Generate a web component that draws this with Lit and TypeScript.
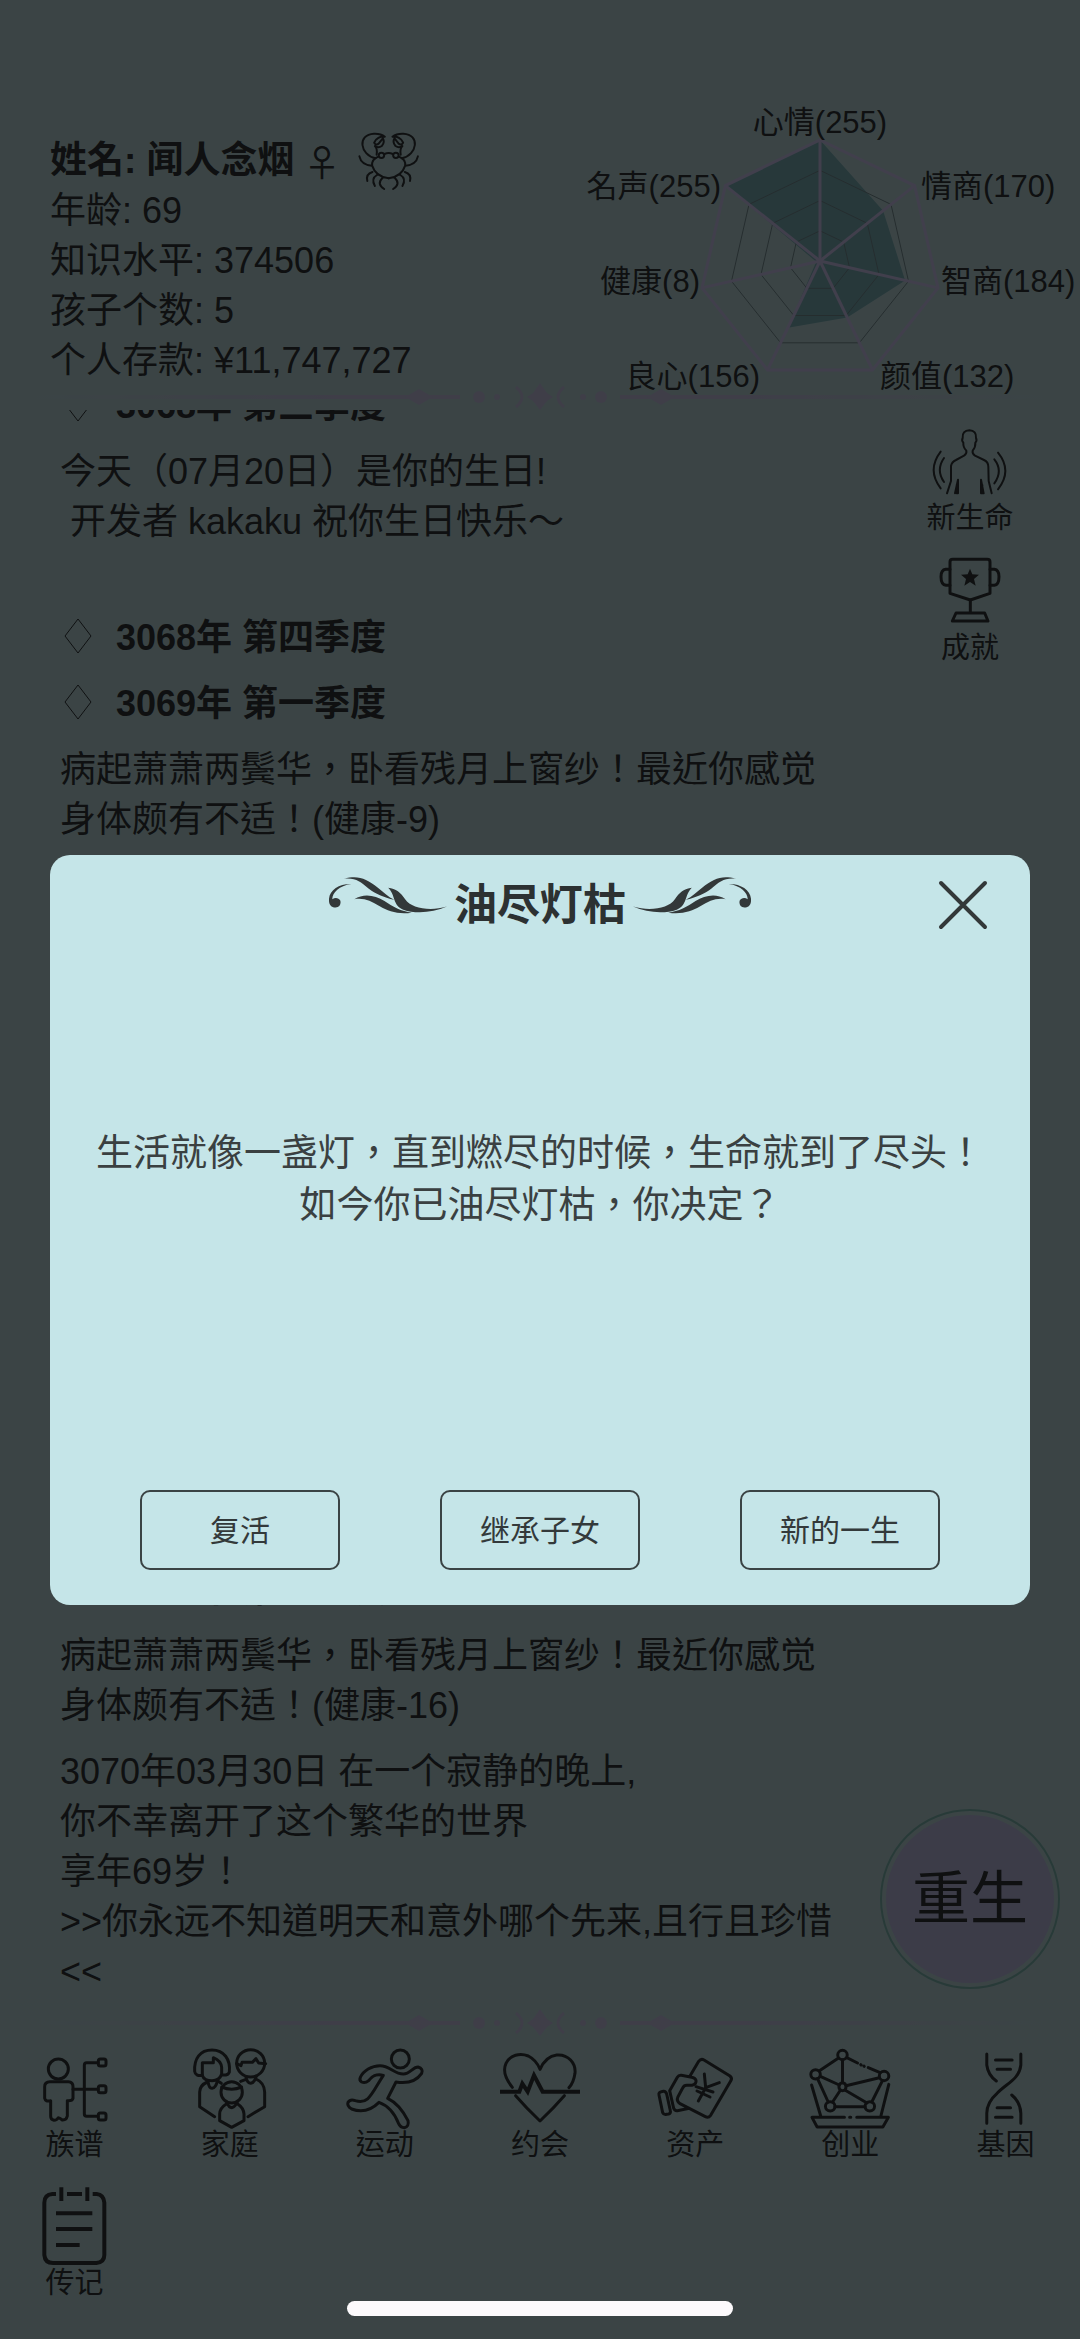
import { LitElement, html, svg, css } from "lit";
import { customElement, state } from "lit/decorators.js";

type Icon = { box: string; art: unknown; weight?: "thin" };

const icons: Record<string, Icon> = {
  crab: {
    box: "1036 121 186 183",
    weight: "thin",
    art: svg`
      <defs>
        <g id="crab-half">
          <path d="M1090 203C1044 192 1036 132 1085 129Q1105 128 1117 138C1104 136 1090 144 1086 156Q1091 165 1099 159L1111 143Q1118 155 1108 166Q1098 173 1088 166Q1096 174 1093 192"/>
          <circle cx="1107" cy="194" r="8"/>
          <path d="M1098 198Q1078 206 1080 225Q1090 258 1128 263M1043 197Q1048 222 1079 225M1081 244Q1061 250 1066 271M1094 253Q1076 264 1088 286M1110 262Q1092 280 1115 295"/>
        </g>
      </defs>
      <use href="#crab-half"/>
      <use href="#crab-half" transform="translate(2256 0) scale(-1 1)"/>
      <path d="M1116 190Q1128 184 1140 190"/>`,
  },
  life: {
    box: "150 36 240 240",
    weight: "thin",
    art: svg`
      <path d="M201 250L213 213V168Q215 156 228 150L252 137Q261 131 259 122Q249 112 250 98Q244 92 248 84Q246 62 268 61Q290 62 288 84Q292 92 286 98Q287 112 278 122Q276 131 285 137L312 150Q325 156 325 170L326 213L335 250"/>
      <path d="M225 250L234 209V250M311 250L303 209V250M230 225V250M307 225V250"/>
      <path d="M182 125Q140 180 182 235M192 144Q167 180 192 216M354 128Q398 182 354 238M343 148Q370 182 343 220"/>`,
  },
  trophy: {
    box: "150 426 240 240",
    art: svg`
      <path d="M218 448H322Q330 448 330 456V550L271 570L210 550V456Q210 448 218 448Z"/>
      <path d="M210 478H197Q183 480 183 500Q183 524 198 526H210M330 478H343Q357 480 357 500Q357 524 343 526H330M271 570V608M228 609H314L324 633H217Z"/>
      <path class="solid" d="M270 476L277 493L297 494L282 507L287 527L270 516L253 527L258 507L243 494L263 493Z"/>`,
  },
  tree: {
    box: "105 57 240 240",
    art: svg`
      <circle cx="175" cy="117" r="30"/>
      <path d="M150 155H205Q219 155 219 170V205Q217 213 202 212V258Q199 271 187 270Q179 263 175 263Q171 271 162 271Q152 269 152 259V212Q136 216 134 205V170Q134 155 150 155Z"/>
      <path d="M219 178H294M294 98H260Q253 98 253 105V252Q253 259 260 259H294"/>
      <rect x="295" y="87" width="23" height="21" rx="6"/>
      <rect x="295" y="167" width="23" height="21" rx="6"/>
      <rect x="295" y="249" width="23" height="21" rx="6"/>`,
  },
  family: {
    box: "570 57 240 240",
    art: svg`
      <path d="M607 136Q586 139 584 124C582 86 600 60 636 60C672 60 692 88 688 126Q685 137 665 135"/>
      <path d="M607 136V98H640V83Q663 92 665 112V132C660 148 646 152 636 152C620 152 610 146 607 136"/>
      <path d="M624 152Q626 175 636 175Q648 173 652 152M622 156Q599 166 599 186V230L644 260M652 152L664 160"/>
      <ellipse cx="752" cy="100" rx="42" ry="41"/>
      <path d="M710 101L723 107L726 97H757L768 86L776 99L797 101"/>
      <path d="M738 141Q742 160 752 160Q763 158 768 141M768 147Q793 158 794 186V230L744 260M738 148L722 154"/>
      <circle cx="695" cy="187" r="32"/>
      <path d="M665 171Q695 184 725 171M680 216Q686 233 696 233Q706 230 712 216M680 221Q659 234 659 252V272L695 292L732 272V252Q731 233 712 221"/>`,
  },
  run: {
    box: "1035 57 240 240",
    art: svg`
      <circle cx="1201" cy="87" r="27"/>
      <path d="M1081 142C1090 122 1115 107 1140 107C1170 107 1182 132 1210 132C1231 132 1238 111 1254 111Q1271 116 1265 130C1250 152 1225 162 1188 156L1163 205C1190 218 1208 240 1224 272Q1228 290 1213 293Q1201 293 1196 281C1184 250 1168 228 1137 217C1112 242 1085 248 1055 237Q1040 229 1044 217Q1051 206 1066 212C1106 226 1116 188 1150 136C1130 130 1114 140 1106 152Q1095 161 1085 156Q1077 151 1081 142Z"/>`,
  },
  heart: {
    box: "540 147 240 240",
    art: svg`
      <path d="M577 262C555 235 548 212 558 190C570 165 600 158 625 168C645 178 655 195 660 208C668 190 685 168 710 165C745 162 768 190 765 220C762 240 755 255 747 263M587 287Q620 325 660 363Q700 325 733 287"/>
      <path class="heavy" d="M540 275H598L607 251L623 275L642 226L668 275H780"/>`,
  },
  asset: {
    box: "1005 147 240 240",
    art: svg`
      <path d="M1110 228L1136 184Q1143 175 1152 180L1230 228Q1238 235 1232 243L1172 346Q1165 355 1156 350L1080 311Q1068 303 1074 290L1088 264Q1092 256 1100 256H1116Q1130 253 1128 241Q1125 233 1115 232L1084 226Q1076 225 1072 232L1049 272L1061 325Q1064 333 1072 332L1108 325"/>
      <path d="M1024 275Q1015 277 1017 285L1028 338Q1031 345 1040 343L1046 342Q1053 340 1051 332L1040 282Q1037 273 1030 274Z"/>
      <path d="M1153 222L1157 263L1198 248M1157 263L1135 303M1128 260L1179 276M1131 273L1170 291"/>`,
  },
  network: {
    box: "885 57 202 240",
    art: svg`
      <ellipse cx="967" cy="75" rx="12" ry="14"/><ellipse cx="899" cy="133" rx="12" ry="14"/>
      <ellipse cx="1072" cy="138" rx="12" ry="14"/><ellipse cx="967" cy="170" rx="9" ry="12"/>
      <ellipse cx="936" cy="229" rx="12" ry="14"/><ellipse cx="1036" cy="229" rx="12" ry="14"/>
      <path d="M967 89V158M957 84L908 123M911 139L959 165M976 167L1060 143M962 180L942 216M973 180L1029 219M948 230H1024M904 146L931 216M1068 152L1041 216M978 83L1005 99M1032 113L1062 128M1013 104L1014 105M1021 108L1022 109"/>
      <path d="M889 165L912 258M1084 163L1064 258M972 262H890L903 291H1069L1083 262H1003M985 262H988"/>`,
  },
  gene: {
    box: "1277 57 202 240",
    art: svg`
      <path d="M1332 72V105Q1335 135 1356 153M1418 72V105C1414 148 1382 160 1358 190Q1332 217 1332 250V280M1395 195Q1417 217 1418 250V280M1354 90H1396M1358 118H1392M1358 233H1392M1354 262H1396"/>`,
  },
  note: {
    box: "105 471 240 240",
    art: svg`
      <path class="heavy" d="M168 492H157Q133 494 133 518V675Q135 699 159 699H289Q313 697 313 675V518Q311 494 290 492H278M201 492H246M184 472V513M262 472V513M168 550H277M168 597H277M168 645H239"/>`,
  },
};

const drawIcon = (name: string) => html`<svg
  class="icon ${icons[name].weight ?? ""}"
  viewBox=${icons[name].box}
  preserveAspectRatio="none"
  aria-hidden="true"
>${icons[name].art}</svg>`;

const attributes = [
  { name: "心情", value: 255, x: 820, y: 133, anchor: "middle" },
  { name: "情商", value: 170, x: 921, y: 197, anchor: "start" },
  { name: "智商", value: 184, x: 941, y: 292, anchor: "start" },
  { name: "颜值", value: 132, x: 880, y: 387, anchor: "start" },
  { name: "良心", value: 156, x: 760, y: 387, anchor: "end" },
  { name: "健康", value: 8, x: 700, y: 292, anchor: "end" },
  { name: "名声", value: 255, x: 721, y: 197, anchor: "end" },
];
const MAX = 255;
const RADIUS = 121;
const CENTER = { x: 820, y: 261 };

const vertex = (i: number, r: number) => {
  const a = (i / attributes.length) * Math.PI * 2 - Math.PI / 2;
  return `${(CENTER.x + r * Math.cos(a)).toFixed(1)},${(CENTER.y + r * Math.sin(a)).toFixed(1)}`;
};
const ring = (r: number) => attributes.map((_, i) => vertex(i, r)).join(" ");

const divider = html`<svg class="divider" viewBox="0 0 1080 24" aria-hidden="true">
  <defs>
    <linearGradient id="fade" gradientUnits="userSpaceOnUse" x1="30" y1="0" x2="1050" y2="0">
      <stop offset="0" stop-color="#d2d0f2" stop-opacity="0"/>
      <stop offset="0.3" stop-color="#d2d0f2"/>
      <stop offset="0.7" stop-color="#d2d0f2"/>
      <stop offset="1" stop-color="#d2d0f2" stop-opacity="0"/>
    </linearGradient>
  </defs>
  <path d="M30 9H460V13H30ZM620 9H1050V13H620Z" fill="url(#fade)"/>
  <g fill="#d2d0f2">
    <path d="M405 11L419 3L433 11L419 19ZM647 11L661 3L675 11L661 19Z"/>
    <circle cx="479" cy="11" r="6"/><circle cx="601" cy="11" r="6"/>
    <circle cx="497" cy="11" r="3"/><circle cx="583" cy="11" r="3"/>
    <path d="M540 -3L547 7L553 11L547 15L540 24L533 15L527 11L533 7Z"/>
  </g>
  <path d="M516 1Q528 11 516 21M564 1Q552 11 564 21" fill="none" stroke="#d2d0f2" stroke-width="3"/>
</svg>`;

const flourish = (side: string) => html`<svg class="flourish ${side}" viewBox="64 108 251 110" preserveAspectRatio="none" aria-hidden="true">
  <path d="M111 129C84 128 62 150 64 180C65 194 71 199 78 199C87 198 90 188 88 178C85 170 77 168 71 174C71 155 86 134 111 129Z"/>
  <path d="M96 113C126 102 143 112 168 140C181 155 190 167 203 176C180 168 163 158 148 142C130 122 122 110 96 113Z"/>
  <path d="M118 174C138 155 162 162 182 179C199 195 218 210 240 214C212 220 190 210 172 195C153 179 138 169 118 174Z"/>
  <path d="M190 140C206 142 217 155 226 174C239 201 278 211 315 196C284 215 247 218 222 205C199 192 206 163 190 140Z"/>
</svg>`;

@customElement("app-root")
export class AppRoot extends LitElement {
  @state() private open = true;

  static styles = css`
    :host {
      display: block;
      position: relative;
      color: #33383a;
      font-family: "Liberation Sans", "Noto Sans CJK TC", "Noto Sans CJK SC", sans-serif;
    }
    button {
      margin: 0;
      padding: 0;
      border: 0;
      background: none;
      color: inherit;
      font: inherit;
      cursor: pointer;
    }
    p, h1, h2, dl, dd, dt { margin: 0; padding: 0; font-size: inherit; }
    svg { display: block; flex: none; }

    .page {
      display: flex;
      flex-direction: column;
      min-height: 100vh;
      background: #c5e5e8;
      font-size: 36px;
      line-height: 50px;
      overflow: hidden;
    }
    .top { display: flex; justify-content: space-between; }
    .stats { padding: 136px 0 0 50px; }
    .name { display: flex; align-items: center; height: 50px; font-size: 37px; white-space: pre; }
    .gender { padding-left: 9px; font-family: "Noto Sans CJK SC", sans-serif; font-weight: 400; }
    .name .icon { width: 64px; height: 61px; margin-left: 16px; }
    .stat { display: flex; }
    .stat dt { white-space: pre; }

    .radar { width: 520px; height: 295px; margin-top: 90px; overflow: visible; font-size: 31px; fill: currentColor; }
    .radar .area { fill: #82bcc4; }
    .radar .grid { fill: none; stroke: #7e969c; stroke-width: 1; }
    .radar .edge { fill: none; stroke: #dad2ff; stroke-width: 3; }

    .divider { width: 100%; height: 24px; overflow: visible; }

    .main { display: flex; flex: 1; padding-bottom: 15px; overflow: hidden; }
    .log { display: flex; flex: 1; flex-direction: column; justify-content: space-between; padding-left: 60px; }
    .entries { display: flex; flex-direction: column; gap: 16px; max-width: 780px; }
    .entries.earlier { margin-top: -29px; }
    .season { display: flex; align-items: center; gap: 20px; font-weight: 700; white-space: pre; }
    .season svg { width: 36px; height: 36px; margin-bottom: 4px; fill: none; stroke: currentColor; stroke-width: 1; }
    .entry { white-space: pre-line; }
    .entry.birthday { white-space: pre; min-height: 150px; }

    .side { display: flex; flex: 0 0 220px; flex-direction: column; align-items: center; gap: 18px; padding: 12px 0 8px; }
    .tile { display: flex; flex-direction: column; align-items: center; font-size: 29px; line-height: 32px; }
    .icon { width: 80px; height: 80px; fill: none; stroke: currentColor; stroke-width: 3; stroke-linecap: round; stroke-linejoin: round; overflow: visible; }
    .icon * { vector-effect: non-scaling-stroke; }
    .icon.thin { stroke-width: 2; }
    .icon .heavy { stroke-width: 4; stroke-linecap: butt; stroke-linejoin: miter; }
    .icon .solid { fill: currentColor; stroke: none; }
    .rebirth {
      box-sizing: border-box;
      width: 180px;
      height: 180px;
      margin-top: auto;
      padding: 4px;
      border: 2px solid #86c4bc;
      border-radius: 50%;
      background: #c8c9f2 content-box;
      font-size: 58px;
    }

    .nav { display: grid; grid-template-columns: repeat(7, 1fr); row-gap: 26px; margin: 0 -3px; padding: 13px 0 40px; }

    .scrim {
      position: absolute;
      inset: 0;
      display: grid;
      place-items: center;
      padding: 120px 50px 0;
      background: rgba(0, 0, 0, 0.7);
    }
    .dialog {
      box-sizing: border-box;
      display: flex;
      flex-direction: column;
      width: 100%;
      min-height: 750px;
      padding: 20px 0 35px;
      border-radius: 20px;
      background: #c5e5e8;
    }
    .head { display: grid; grid-template-columns: 1fr auto 1fr; align-items: center; padding: 0 37px; }
    .title { display: flex; grid-column: 2; align-items: center; gap: 7px; color: #2c3132; font-size: 43px; line-height: 60px; }
    .flourish { width: 118px; height: 37px; margin-bottom: 18px; fill: #333839; }
    .flourish.right { transform: scaleX(-1); }
    .close { justify-self: end; width: 60px; height: 60px; }
    .close svg { width: 60px; height: 60px; fill: none; stroke: #333839; stroke-width: 4; stroke-linecap: round; }
    .message {
      display: flex;
      flex: 1;
      flex-direction: column;
      justify-content: center;
      padding: 0 24px 64px;
      color: #3a4041;
      font-size: 37px;
      line-height: 52px;
      text-align: center;
    }
    .choices { display: grid; grid-template-columns: repeat(3, 1fr); justify-items: center; padding: 0 40px; }
    .choice { box-sizing: border-box; width: 200px; height: 80px; padding-bottom: 4px; border: 2px solid #3a4344; border-radius: 10px; color: #33393a; font-size: 30px; }

    .home { position: absolute; bottom: 23px; left: 50%; width: 386px; height: 15px; border-radius: 8px; background: #fcfafc; transform: translateX(-50%); }
  `;

  private season(text: string) {
    return html`<h2 class="season"><svg viewBox="0 0 36 36" aria-hidden="true"><path d="M18 1L31 18L18 35L5 18Z"/></svg>${text}</h2>`;
  }

  private tile(icon: string, label: string) {
    return html`<button class="tile" type="button">${drawIcon(icon)}<span>${label}</span></button>`;
  }

  render() {
    const stats = [
      ["年龄", "69"],
      ["知识水平", "374506"],
      ["孩子个数", "5"],
      ["个人存款", "¥11,747,727"],
    ];
    const nav = [
      ["tree", "族谱"],
      ["family", "家庭"],
      ["run", "运动"],
      ["heart", "约会"],
      ["asset", "资产"],
      ["network", "创业"],
      ["gene", "基因"],
      ["note", "传记"],
    ];
    return html`
      <div class="page">
        <header class="top">
          <div class="stats">
            <h1 class="name">姓名: 闻人念烟<span class="gender">♀</span>${drawIcon("crab")}</h1>
            <dl>
              ${stats.map(([k, v]) => html`<div class="stat"><dt>${k}: </dt><dd>${v}</dd></div>`)}
            </dl>
          </div>
          <svg class="radar" viewBox="560 90 520 295">
            <polygon class="area" points=${attributes.map((a, i) => vertex(i, (a.value / MAX) * RADIUS)).join(" ")}></polygon>
            ${[1, 2, 3].map((n) => svg`<polygon class="grid" points=${ring((RADIUS * n) / 4)}></polygon>`)}
            <polygon class="edge" points=${ring(RADIUS)}></polygon>
            ${attributes.map((_, i) => svg`<polyline class="edge" points="${CENTER.x},${CENTER.y} ${vertex(i, RADIUS)}"></polyline>`)}
            ${attributes.map((a) => svg`<text x=${a.x} y=${a.y} text-anchor=${a.anchor}>${a.name}(${a.value})</text>`)}
          </svg>
        </header>
        ${divider}
        <main class="main">
          <div class="log">
            <div class="entries earlier">
              ${this.season("3068年 第三季度")}
              <p class="entry birthday">${"今天（07月20日）是你的生日!\n 开发者 kakaku 祝你生日快乐～"}</p>
              ${this.season("3068年 第四季度")}
              ${this.season("3069年 第一季度")}
              <p class="entry">病起萧萧两鬓华，卧看残月上窗纱！最近你感觉身体颇有不适！(健康-9)</p>
            </div>
            <div class="entries">
              ${this.season("3070年 第一季度")}
              <p class="entry">病起萧萧两鬓华，卧看残月上窗纱！最近你感觉身体颇有不适！(健康-16)</p>
              <p class="entry">${"3070年03月30日 在一个寂静的晚上,\n你不幸离开了这个繁华的世界\n享年69岁！\n>>你永远不知道明天和意外哪个先来,且行且珍惜\n<<"}</p>
            </div>
          </div>
          <div class="side">
            ${this.tile("life", "新生命")} ${this.tile("trophy", "成就")}
            <button class="rebirth" type="button">重生</button>
          </div>
        </main>
        ${divider}
        <nav class="nav">${nav.map(([icon, label]) => this.tile(icon, label))}</nav>
      </div>
      ${this.open
        ? html`<div class="scrim">
            <section class="dialog" role="dialog" aria-modal="true" aria-labelledby="dialog-title">
              <div class="head">
                <h2 class="title">${flourish("left")}<span id="dialog-title">油尽灯枯</span>${flourish("right")}</h2>
                <button class="close" type="button" aria-label="关闭" @click=${() => (this.open = false)}>
                  <svg viewBox="0 0 60 60" aria-hidden="true"><path d="M8 8L52 52M52 8L8 52"/></svg>
                </button>
              </div>
              <div class="message">
                <p>生活就像一盏灯，直到燃尽的时候，生命就到了尽头！</p>
                <p>如今你已油尽灯枯，你决定？</p>
              </div>
              <div class="choices">
                <button class="choice" type="button">复活</button>
                <button class="choice" type="button">继承子女</button>
                <button class="choice" type="button">新的一生</button>
              </div>
            </section>
          </div>`
        : null}
      <div class="home"></div>
    `;
  }
}
